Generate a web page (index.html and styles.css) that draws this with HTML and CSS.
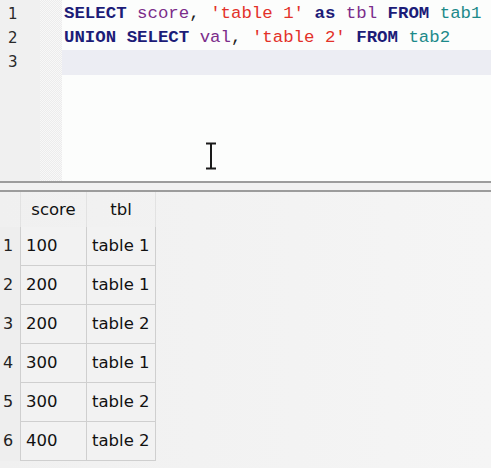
FILE: index.html
```html
<!DOCTYPE html>
<html>
<head>
<meta charset="utf-8">
<link rel="stylesheet" href="styles.css">
</head>
<body>
<div class="app">
  <div class="editor">
    <div class="gutter">
      <div class="nums">
        <div class="num">1</div>
        <div class="num">2</div>
        <div class="num">3</div>
      </div>
      <div class="fold"></div>
    </div>
    <div class="code">
      <div class="line"><span class="kw">SELECT</span> <span class="id">score</span>, <span class="str">'table 1'</span> <span class="kw2">as</span> <span class="id">tbl</span> <span class="kw">FROM</span> <span class="tb">tab1</span></div>
      <div class="line"><span class="kw">UNION</span> <span class="kw">SELECT</span> <span class="id">val</span>, <span class="str">'table 2'</span> <span class="kw">FROM</span> <span class="tb">tab2</span></div>
      <div class="line current"></div>
      <svg class="ibeam" width="12" height="28" viewBox="0 0 12 28"><path d="M1 1.5h10M1 26.5h10M6 1.5v25" stroke="#1a1a1a" stroke-width="2" fill="none"/></svg>
    </div>
  </div>
  <div class="splitter"></div>
  <div class="results">
    <table class="grid">
      <thead>
        <tr><th class="rn"></th><th class="c1">score</th><th class="c2">tbl</th></tr>
      </thead>
      <tbody>
        <tr><td class="rn">1</td><td>100</td><td>table 1</td></tr>
        <tr><td class="rn">2</td><td>200</td><td>table 1</td></tr>
        <tr><td class="rn">3</td><td>200</td><td>table 2</td></tr>
        <tr><td class="rn">4</td><td>300</td><td>table 1</td></tr>
        <tr><td class="rn">5</td><td>300</td><td>table 2</td></tr>
        <tr><td class="rn">6</td><td>400</td><td>table 2</td></tr>
      </tbody>
    </table>
  </div>
</div>
</body>
</html>
```
FILE: styles.css
```css
html, body { margin: 0; padding: 0; }
body { width: 491px; height: 468px; overflow: hidden; background: #f1f1f1; }
.app { display: flex; flex-direction: column; height: 468px; }
.editor { display: flex; height: 181px; background: #fcfdfc; }
.gutter { display: flex; width: 62px; flex: none; }
.nums { width: 40px; background: #f0f0f0; padding-top: 2px; }
.num { height: 24px; line-height: 24px; padding-left: 8px; font-family: "DejaVu Sans", sans-serif; font-size: 15px; color: #2a2a2a; }
.fold { width: 22px; background-color: #f6f6f6; background-image: repeating-conic-gradient(#ececec 0 25%, #f8f8f8 0 50%); background-size: 2px 2px; }
.code { position: relative; flex: 1; padding-top: 2px; font-family: "Liberation Mono", monospace; font-size: 17.4px; }
.line { height: 24px; line-height: 24px; padding-left: 2px; white-space: pre; color: #222; }
.line.current { background: #ecedf3; height: 25px; }
.kw { color: #1c1c78; font-weight: bold; }
.kw2 { color: #1c1c78; font-weight: bold; }
.id { color: #7b2d8a; }
.str { color: #e3312a; }
.tb { color: #1c8a8a; }
.ibeam { position: absolute; left: 143px; top: 142px; }
.splitter { height: 7px; flex: none; border-top: 2px solid #9c9c9c; border-bottom: 2px solid #9c9c9c; background: #f1f1f1; }
.results { flex: 1; background: linear-gradient(to right, #f0f0f0, #f5f5f5); }
.grid { border-collapse: collapse; font-family: "DejaVu Sans", sans-serif; font-size: 16.5px; line-height: 20px; color: #111; }
.grid th { height: 35px; font-weight: normal; text-align: center; padding: 0; border-left: 1px solid #e2e2e2; border-right: 1px solid #e2e2e2; vertical-align: middle; }
.grid th.rn { border-left: none; }
.grid td { height: 38px; padding: 0 0 0 5px; border: 1px solid #cfcfcf; background: #f2f2f2; text-align: left; vertical-align: middle; }
.grid td.rn { border: none; background: #eeeeee; padding: 0 0 0 3px; color: #222; font-size: 16px; }
.grid .rn { width: 17px; }
.grid .c1 { width: 65px; }
.grid .c2 { width: 68px; }
.grid tbody tr:first-child td { border-top: none; }
.grid tbody tr:first-child td.rn { border: none; }
```
